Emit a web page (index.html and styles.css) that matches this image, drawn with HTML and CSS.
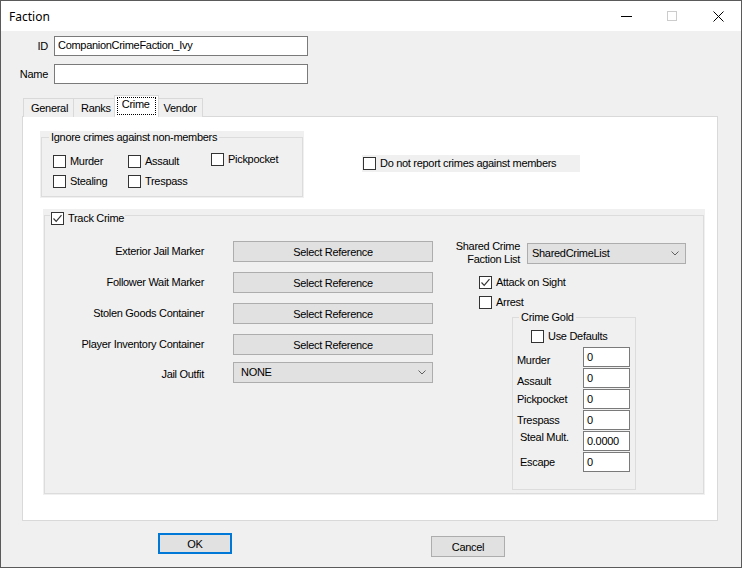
FILE: index.html
```html
<!DOCTYPE html>
<html lang="en">
<head>
    <meta charset="UTF-8">
    <title>Faction</title>
    <link rel="stylesheet" href="styles.css">
</head>
<body>

    <div class="window">
        <div class="titlebar">
            <span class="title">Faction</span>
            <div class="caption">
                <span class="cap"><svg width="11" height="1"><rect width="11" height="1" fill="#000"/></svg></span>
                <span class="cap"><svg width="10" height="10"><rect x="0.5" y="0.5" width="9" height="9" fill="none" stroke="#cccccc"/></svg></span>
                <span class="cap"><svg width="11" height="11"><path d="M0.5 0.5L10.5 10.5M10.5 0.5L0.5 10.5" stroke="#000" stroke-width="1"/></svg></span>
            </div>
        </div>

        <div class="content">
            <div class="fields">
                <span class="field-label">ID</span>
                <div class="textbox">CompanionCrimeFaction_Ivy</div>
                <span class="field-label">Name</span>
                <div class="textbox"></div>
            </div>

            <div class="tabs">
                <span class="tab">General</span>
                <span class="tab">Ranks</span>
                <span class="tab active"><span class="focus">Crime</span></span>
                <span class="tab">Vendor</span>
            </div>

            <div class="panel">
                <div class="top-row">
                    <div class="group ignore-group">
                        <div class="frame">
                            <div class="legend">Ignore crimes against non-members</div>
                            <div class="ignore-grid">
                                <span class="check"><span class="box"></span>Murder</span>
                                <span class="check"><span class="box"></span>Assault</span>
                                <span class="check pick"><span class="box"></span>Pickpocket</span>
                                <span class="check"><span class="box"></span>Stealing</span>
                                <span class="check"><span class="box"></span>Trespass</span>
                            </div>
                        </div>
                    </div>
                    <div class="report">
                        <span class="check"><span class="box"></span>Do not report crimes against members</span>
                    </div>
                </div>

                <div class="group track-group">
                    <div class="frame track-frame">
                        <div class="legend track-legend">
                            <span class="check"><span class="box"><svg width="11" height="11"><path d="M1.5 5.5L4.2 8.3L9.5 2.2" fill="none" stroke="#333" stroke-width="1.2"/></svg></span>Track Crime</span>
                        </div>
                        <div class="track-body">
                            <div class="ref-grid">
                                <span class="ref-label">Exterior Jail Marker</span>
                                <button class="btn ref-btn">Select Reference</button>
                                <span class="ref-label">Follower Wait Marker</span>
                                <button class="btn ref-btn">Select Reference</button>
                                <span class="ref-label">Stolen Goods Container</span>
                                <button class="btn ref-btn">Select Reference</button>
                                <span class="ref-label">Player Inventory Container</span>
                                <button class="btn ref-btn">Select Reference</button>
                                <span class="ref-label jail">Jail Outfit</span>
                                <div class="combo jail">NONE<svg width="8" height="5"><path d="M0.5 0.5L4 4L7.5 0.5" fill="none" stroke="#606060"/></svg></div>
                            </div>

                            <div class="right-col">
                                <div class="shared-row">
                                    <span class="shared-label">Shared Crime<br>Faction List</span>
                                    <div class="combo shared">SharedCrimeList<svg width="8" height="5"><path d="M0.5 0.5L4 4L7.5 0.5" fill="none" stroke="#606060"/></svg></div>
                                </div>
                                <span class="check attack"><span class="box"><svg width="11" height="11"><path d="M1.5 5.5L4.2 8.3L9.5 2.2" fill="none" stroke="#333" stroke-width="1.2"/></svg></span>Attack on Sight</span>
                                <span class="check arrest"><span class="box"></span>Arrest</span>

                                <div class="frame gold-frame">
                                    <div class="legend">Crime Gold</div>
                                    <span class="check defaults"><span class="box"></span>Use Defaults</span>
                                    <div class="gold-grid">
                                        <span class="gold-label low">Murder</span>
                                        <div class="textbox small">0</div>
                                        <span class="gold-label low">Assault</span>
                                        <div class="textbox small">0</div>
                                        <span class="gold-label">Pickpocket</span>
                                        <div class="textbox small">0</div>
                                        <span class="gold-label">Trespass</span>
                                        <div class="textbox small">0</div>
                                        <span class="gold-label high indent">Steal Mult.</span>
                                        <div class="textbox small">0.0000</div>
                                        <span class="gold-label indent">Escape</span>
                                        <div class="textbox small">0</div>
                                    </div>
                                </div>
                            </div>
                        </div>
                    </div>
                </div>
            </div>

            <div class="buttons">
                <button class="btn ok">OK</button>
                <button class="btn cancel">Cancel</button>
            </div>
        </div>
    </div>

</body>
</html>
```

FILE: styles.css
```css
body {
    margin: 0;
    padding: 0;
    font-family: 'Liberation Sans', Arial, sans-serif;
    font-size: 11px;
    line-height: 13px;
    letter-spacing: -0.3px;
    color: #000;
}
.window {
    width: 742px;
    height: 568px;
    box-sizing: border-box;
    border: 1px solid #5a5a5a;
    background-color: #f0f0f0;
    overflow: hidden;
}
.titlebar {
    height: 30px;
    background-color: white;
    display: flex;
    align-items: center;
}
.title {
    font-family: 'Noto Sans', 'Open Sans', sans-serif;
    font-size: 12px;
    letter-spacing: 0;
    padding-left: 8px;
    flex: 1;
}
.caption {
    display: flex;
}
.cap {
    width: 46px;
    height: 30px;
    display: flex;
    align-items: center;
    justify-content: center;
}
.content {
    padding-top: 5px;
}

/* ID / Name */
.fields {
    display: grid;
    grid-template-columns: 47px 254px;
    column-gap: 6px;
    row-gap: 8px;
}
.field-label {
    text-align: right;
    align-self: center;
}
.textbox {
    height: 20px;
    box-sizing: border-box;
    background-color: white;
    border: 1px solid #7a7a7a;
    padding: 2px 3px;
}

/* tabs */
.tabs {
    display: flex;
    align-items: flex-end;
    margin: 11px 0 -1px 23px;
    height: 22px;
}
.tab {
    height: 19px;
    box-sizing: border-box;
    border: 1px solid #d9d9d9;
    border-bottom: none;
    margin-left: -1px;
    padding: 3px 5px 0 7px;
    background-color: #f0f0f0;
}
.tab.active {
    height: 22px;
    background-color: white;
    margin: 0 -2px 0 -3px;
    padding: 1px 2px 0 2px;
    position: relative;
    z-index: 1;
}
.focus {
    display: block;
    border: 1px dotted #000;
    padding: 0 5px 3px 4px;
}
.panel {
    width: 696px;
    height: 405px;
    box-sizing: border-box;
    margin-left: 21px;
    background-color: white;
    border: 1px solid #d9d9d9;
    padding: 14px 0 0 17px;
}

/* group boxes */
.group {
    background-color: #f0f0f0;
    padding: 6px 1px 1px 1px;
    box-sizing: border-box;
}
.frame {
    border: 1px solid #dcdcdc;
    box-sizing: border-box;
}
.legend {
    display: flex;
    width: fit-content;
    margin: -7px 0 0 7px;
    padding: 0 2px;
    line-height: 13px;
    background-color: #f0f0f0;
}
.top-row {
    display: flex;
    align-items: flex-start;
}
.ignore-group {
    width: 264px;
}
.ignore-grid {
    display: grid;
    grid-template-columns: 75px 83px auto;
    grid-auto-rows: 13px;
    row-gap: 7px;
    margin: 11px 0 0 11px;
    padding-bottom: 8px;
}
.check {
    display: flex;
    align-items: center;
    gap: 4px;
    height: 13px;
}
.check.pick {
    margin-top: -2px;
}
.box {
    width: 13px;
    height: 13px;
    box-sizing: border-box;
    border: 1px solid #333;
    background-color: white;
    display: flex;
    align-items: center;
    justify-content: center;
    flex-shrink: 0;
}
.report {
    margin: 24px 0 0 58px;
    width: 218px;
    height: 17px;
    background-color: #f0f0f0;
    padding: 2px 0 0 1px;
    box-sizing: border-box;
}

/* track crime */
.track-group {
    width: 662px;
    height: 286px;
    margin: 11px 0 0 3px;
}
.track-frame {
    height: 100%;
}
.track-legend {
    margin: -4px 0 0 5px;
    padding: 0 1px;
}
.track-body {
    display: flex;
    align-items: flex-start;
}
.ref-grid {
    display: grid;
    grid-template-columns: 159px 200px;
    grid-auto-rows: 21px;
    column-gap: 29px;
    row-gap: 10px;
    margin-top: 16px;
}
.ref-label {
    text-align: right;
    align-self: center;
}
.btn {
    font-family: inherit;
    font-size: 11px;
    letter-spacing: inherit;
    color: #000;
    background-color: #e1e1e1;
    border: 1px solid #adadad;
    padding: 0;
    box-sizing: border-box;
}
.ref-btn {
    height: 21px;
}
.ref-label.jail, .combo.jail {
    margin-top: -3px;
}
.combo {
    height: 21px;
    box-sizing: border-box;
    background-color: #e1e1e1;
    border: 1px solid #adadad;
    display: flex;
    align-items: center;
    justify-content: space-between;
    padding: 0 6px 0 7px;
}
.right-col {
    margin: 15px 0 0 7px;
    display: flex;
    flex-direction: column;
    align-items: flex-start;
}
.shared-row {
    display: flex;
    align-items: center;
    gap: 7px;
}
.shared-label {
    width: 80px;
    text-align: right;
}
.combo.shared {
    width: 159px;
    padding-left: 4px;
}
.check.attack {
    margin: 10px 0 0 39px;
}
.check.arrest {
    margin: 7px 0 0 39px;
}
.gold-frame {
    margin: 8px 0 0 72px;
    width: 124px;
    height: 173px;
}
.gold-frame .legend {
    margin-left: 6px;
}
.check.defaults {
    margin: 6px 0 0 18px;
}
.gold-grid {
    display: grid;
    grid-template-columns: 66px 47px;
    grid-auto-rows: 20px;
    row-gap: 1px;
    margin: 4px 0 0 4px;
}
.gold-label {
    align-self: center;
}
.gold-label.low {
    align-self: end;
}
.gold-label.high {
    align-self: start;
}
.gold-label.indent {
    padding-left: 3px;
}
.textbox.small {
    padding: 3px 3px 0 3px;
}

/* dialog buttons */
.buttons {
    display: flex;
    align-items: flex-start;
    padding: 12px 0 0 157px;
    gap: 199px;
}
.ok, .cancel {
    width: 74px;
    height: 21px;
}
.ok {
    border: 2px solid #0078d7;
}
.cancel {
    margin-top: 3px;
}
```
